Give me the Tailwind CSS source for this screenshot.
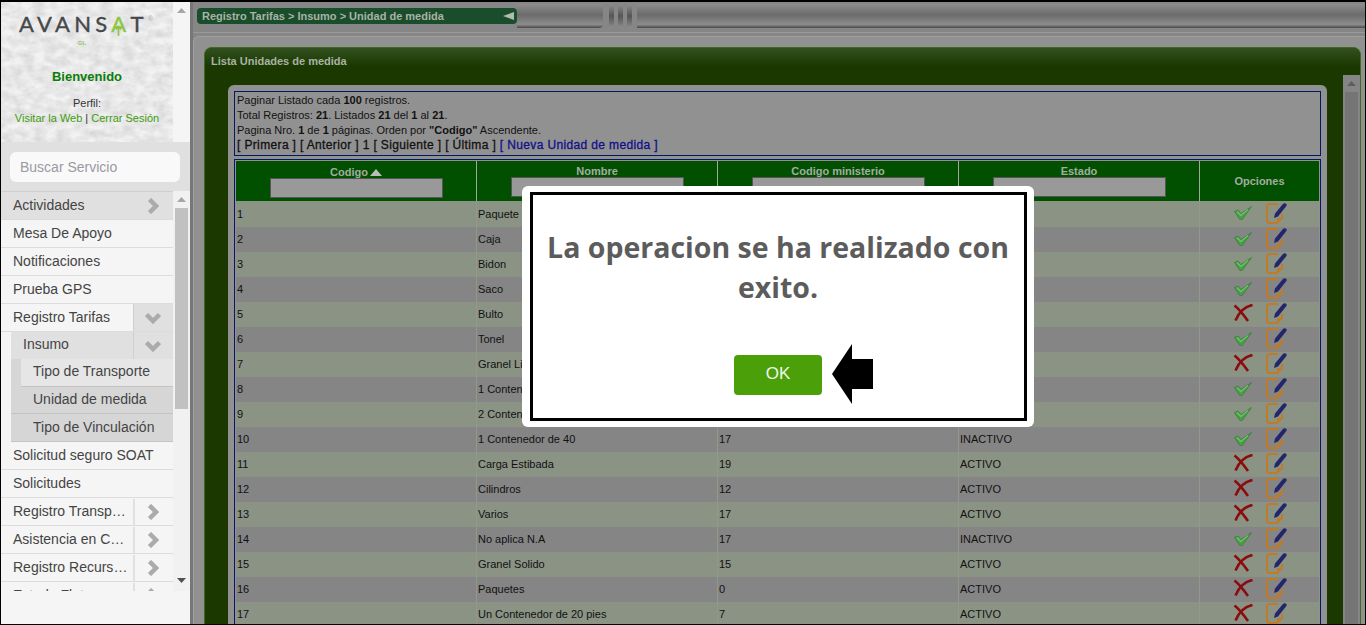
<!DOCTYPE html>
<html lang="en">
<head>
    <meta charset="UTF-8">
    <title>Unidad de medida - Avansat</title>
    <script src="https://cdn.jsdelivr.net/npm/@tailwindcss/browser@4"></script>
</head>
<body class="overflow-hidden bg-black">
<svg class="hidden">
    <defs>
        <filter id="paper"><feTurbulence type="fractalNoise" baseFrequency="0.09 0.14" numOctaves="3" seed="4"/><feColorMatrix values="0 0 0 0 0.6  0 0 0 0 0.6  0 0 0 0 0.6  0.5 0 0 0 -0.13"/></filter>
        <symbol id="check" viewBox="0 0 18 14"><path d="M0.500 5.500 L4 4 L7 7.500 L17.500 0.500 L8 13.700 L6 13.700 Z" fill="#4a9f48" stroke="#35803a" stroke-width="0.800"/><path d="M3 5.500 L6.800 9.500 L14 3.500" fill="none" stroke="#72c26b" stroke-width="1.200"/></symbol>
        <symbol id="cross" viewBox="0 0 20 18"><path d="M1.500 1.500 C6 5 10 10 15 17" fill="none" stroke="#8a0c0c" stroke-width="2.600"/><path d="M19.500 1 C12 2.500 6 8 2.500 16.500" fill="none" stroke="#8a0c0c" stroke-width="2.600"/></symbol>
        <symbol id="edit" viewBox="0 0 21 21"><path d="M12 1 H4 Q1 1 1 4 V17 Q1 20 4 20 H11 L16 15 V11" fill="none" stroke="#c17b26" stroke-width="2"/><path d="M11 20 V15 H16 Z" fill="#c17b26"/><path d="M9 10.500 L16.500 1.500 Q18.500 -0.500 20.500 1 Q21 2.500 20 3.500 L12 13.500 L8 15 Z" fill="#23266b"/></symbol>
        <symbol id="chev-right" viewBox="0 0 12 16"><path d="M2.500 1.500 L9 8 L2.500 14.500" fill="none" stroke="#ababab" stroke-width="4.500"/></symbol>
        <symbol id="chev-down" viewBox="0 0 16 12"><path d="M1.500 2.500 L8 9 L14.500 2.500" fill="none" stroke="#ababab" stroke-width="4.500"/></symbol>
    </defs>
</svg>

<div class="relative flex w-[1366px] h-[625px] box-border border-t-2 border-x border-b border-black overflow-hidden font-['Liberation_Sans',Arial,sans-serif]">

    <!-- menu lateral -->
    <aside class="flex flex-col w-[189px] shrink-0 bg-[#f5f5f5]">
        <div class="flex h-[140px] shrink-0">
            <div class="relative w-[172px] bg-[#f2f2f2] overflow-hidden flex flex-col items-center">
                <svg class="absolute inset-0 w-full h-full"><rect width="100%" height="100%" filter="url(#paper)"/></svg>
                <div class="relative mt-[9px] h-[30px] flex items-start -ml-[2px]">
                    <span class="font-['Lato',sans-serif] text-[22px] leading-[26px] tracking-[4.300px] text-[#45484b] [-webkit-text-stroke:0.4px_#45484b]">AVANS<span class="relative text-[#8cc63f] [-webkit-text-stroke:0.4px_#8cc63f]">A<svg class="absolute left-[4px] top-[15px] w-[7px] h-[11px]" viewBox="0 0 7 11"><path d="M3.500 11 V2 M1 4.500 L3.500 1.500 L6 4.500" fill="none" stroke="#8cc63f" stroke-width="1.600"/></svg></span>T</span>
                    <span class="text-[7px] leading-[8px] mt-[4px] text-[#aaa]">®</span>
                </div>
                <span class="relative -ml-[10px] -mt-[1px] text-[6px] font-bold leading-[6px] text-[#9cc45c]">GL</span>
                <p class="relative mt-[23px] text-[13px] leading-[15px] text-[#0a7d0a] font-bold">Bienvenido</p>
                <p class="relative mt-[13px] text-[11px] leading-[13px] text-[#333]">Perfil:</p>
                <p class="relative mt-[0px] text-[11px] leading-[16px] text-[#3f9a0f]">Visitar la Web <span class="text-[#333]">|</span> Cerrar Sesión</p>
            </div>
            <div class="flex-1 flex justify-center pt-[6px]">
                <svg class="w-[9px] h-[5px]" viewBox="0 0 9 5"><path d="M4.500 0 L9 5 H0 Z" fill="#a6a6a6"/></svg>
            </div>
        </div>
        <div class="h-[49px] shrink-0 bg-[#e0e0e0] pt-[10px] pl-[9px]">
            <div class="w-[170px] h-[30px] rounded-md bg-[#f9f9f9] pl-[10px] text-[14px] leading-[30px] text-[#9a9aa2]">Buscar Servicio</div>
        </div>
        <div class="flex h-[400px] shrink-0 overflow-hidden">
            <ul id="menu" class="w-[172px] text-[14px] text-[#444] border-t border-[#cfcfcf]"></ul>
            <div class="flex-1 flex flex-col items-center bg-[#f1f1f1]">
                <svg class="w-[9px] h-[5px] mt-[6px]" viewBox="0 0 9 5"><path d="M4.500 0 L9 5 H0 Z" fill="#a6a6a6"/></svg>
                <div class="w-[13px] h-[201px] mt-[6px] bg-[#c1c1c1]"></div>
                <svg class="w-[9px] h-[5px] mt-auto mb-[8px]" viewBox="0 0 9 5"><path d="M4.500 5 L9 0 H0 Z" fill="#505050"/></svg>
            </div>
        </div>
    </aside>

    <!-- contenido -->
    <main class="flex-1 flex flex-col bg-[#868686] border-l-[3px] border-[#777] min-w-0">
        <div class="relative flex h-[26px] shrink-0 items-start pt-[6px] pl-[4px]">
            <div class="flex items-center justify-between w-[320px] h-[16px] pl-[5px] pr-[3px] bg-[#1a4d2b] rounded-sm text-[11px] leading-[18px] font-bold text-[#a9b3a5]">
                <span>Registro Tarifas &gt; Insumo &gt; Unidad de medida</span>
                <svg class="w-[11px] h-[8px]" viewBox="0 0 11 8"><path d="M0 4 L11 0 V8 Z" fill="#b4bab2"/></svg>
            </div>
            <div class="flex-1 h-[24px] -mt-[4px] flex">
                <div class="w-[86px] bg-[linear-gradient(#8d8d8d,#6b6b6b_45%,#8c8c8c_85%,#4a4a4a)] rounded-r-sm"></div>
                <div class="w-[6px]"></div>
                <div class="w-[5px] bg-[linear-gradient(#8d8d8d,#555_50%,#8c8c8c)] mr-[4px]"></div>
                <div class="w-[5px] bg-[linear-gradient(#8d8d8d,#555_50%,#8c8c8c)] mr-[4px]"></div>
                <div class="w-[5px] bg-[linear-gradient(#8d8d8d,#555_50%,#8c8c8c)] mr-[5px]"></div>
                <div class="flex-1 bg-[linear-gradient(#8d8d8d,#6b6b6b_45%,#8c8c8c_85%,#4a4a4a)]"></div>
            </div>
        </div>
        <div class="h-[5px] shrink-0 border-b border-[#9a9a9a]"></div>
        <div class="h-[3px] shrink-0"></div>
        <div class="flex-1 min-h-0 bg-[#919191] border-l border-t border-[#a0a0a0] rounded-tl-md pt-[10px] pl-[10px] pr-[4px]">
            <section class="h-full flex flex-col rounded-t-lg border border-[#3f6b20] border-b-0 bg-[#1a3800] overflow-hidden">
                <div class="h-[18px] shrink-0 bg-[linear-gradient(#33511f,#1a3800)]"></div>
                <div class="flex-1 min-h-0 flex">
                    <div class="flex-1 min-w-0 flex flex-col">
                        <h1 class="h-[20px] -mt-[15px] pl-[6px] text-[11px] leading-[20px] font-bold text-[#aab2a4]">Lista Unidades de medida</h1>
                        <div class="flex-1 min-h-0 ml-[23px] mr-[16px] mt-[14px] p-[6px] pb-0 bg-[#919191] rounded-t-md overflow-hidden">
                            <div class="h-[65px] border border-[#001a66] pl-[2px] pt-[1px] text-[11px] leading-[15px] text-[#111]">
                                <p>Paginar Listado cada <b>100</b> registros.</p>
                                <p>Total Registros: <b>21</b>. Listados <b>21</b> del <b>1</b> al <b>21</b>.</p>
                                <p>Pagina Nro. <b>1</b> de <b>1</b> páginas. Orden por <b>"Codigo"</b> Ascendente.</p>
                                <p class="text-[12px] leading-[15px] tracking-[0.360px] [-webkit-text-stroke:0.3px]">[ Primera ] [ Anterior ] 1 [ Siguiente ] [ Última ] <span class="text-[#10108c]">[ Nueva Unidad de medida ]</span></p>
                            </div>
                            <div class="mt-[3px] border border-[#001a66] border-b-0 p-[1px] pb-0">
                                <div class="grid grid-cols-[241px_241px_241px_241px_1fr] h-[40px] bg-[#005000] text-[11px] font-bold text-[#a3aca0]">
                                    <div class="flex flex-col items-center border-r border-[#9fa89c] pt-[5px]">
                                        <span class="h-[12px] leading-[13px] flex items-center gap-[2px]">Codigo <svg class="w-[12px] h-[7px]" viewBox="0 0 12 7"><path d="M6 0 L12 7 H0 Z" fill="#b8bdb6"/></svg></span>
                                        <div class="w-[173px] h-[20px] bg-[#999] border border-[#555]"></div>
                                    </div>
                                    <div class="flex flex-col items-center border-r border-[#9fa89c] pt-[4px]">
                                        <span class="h-[12px] leading-[13px]">Nombre</span>
                                        <div class="w-[173px] h-[20px] bg-[#999] border border-[#555]"></div>
                                    </div>
                                    <div class="flex flex-col items-center border-r border-[#9fa89c] pt-[4px]">
                                        <span class="h-[12px] leading-[13px]">Codigo ministerio</span>
                                        <div class="w-[173px] h-[20px] bg-[#999] border border-[#555]"></div>
                                    </div>
                                    <div class="flex flex-col items-center border-r border-[#9fa89c] pt-[4px]">
                                        <span class="h-[12px] leading-[13px]">Estado</span>
                                        <div class="w-[173px] h-[20px] bg-[#999] border border-[#555]"></div>
                                    </div>
                                    <div class="flex items-center justify-center">Opciones</div>
                                </div>
                                <div id="rows" class="text-[11px] text-[#111]"></div>
                            </div>
                        </div>
                    </div>
                    <div class="w-[17px] shrink-0 mt-[9px] flex flex-col items-center bg-[#858585]">
                        <svg class="w-[9px] h-[5px] mt-[6px]" viewBox="0 0 9 5"><path d="M4.500 0 L9 5 H0 Z" fill="#5e5e5e"/></svg>
                        <div class="w-[13px] flex-1 mt-[6px] bg-[#757575]"></div>
                    </div>
                </div>
            </section>
        </div>
    </main>

    <!-- mensaje -->
    <div class="absolute left-[521px] top-[184px] w-[512px] h-[241px] rounded-md bg-white pt-[6px] pl-[8px] pr-[7px] pb-[6px]">
        <div class="h-full border-[3px] border-black flex flex-col items-center pt-[32px]">
            <p class="w-[480px] -ml-[1px] text-center font-['Open_Sans',sans-serif] text-[28.5px] leading-[40px] font-bold text-[#5c5c5c]">La operacion se ha realizado con exito.</p>
            <div class="relative -ml-[1px] mt-[48px]">
                <div class="w-[88px] h-[40px] rounded bg-[#4ba00a] text-center text-[17px] leading-[38px] text-[#f2f7ec]">OK</div>
                <svg class="absolute left-[98px] -top-[11px] w-[41px] h-[60px]" viewBox="0 0 41 60"><path d="M0 30 L20 0 V15 H41 V45 H20 V60 Z" fill="#000"/></svg>
            </div>
        </div>
    </div>
</div>

<script>
    var menu = [
        ["Actividades", "right", "bg-[#e0e0e0]"],
        ["Mesa De Apoyo"],
        ["Notificaciones"],
        ["Prueba GPS"],
        ["Registro Tarifas", "down"],
        ["Insumo", "down", "sub"],
        ["Tipo de Transporte", "", "leaf1"],
        ["Unidad de medida", "", "leaf2"],
        ["Tipo de Vinculación", "", "leaf3"],
        ["Solicitud seguro SOAT"],
        ["Solicitudes"],
        ["Registro Transportadores", "right"],
        ["Asistencia en Carretera", "right"],
        ["Registro Recursos", "right"],
        ["Estado Fletes", "right"]
    ];
    document.getElementById("menu").innerHTML = menu.map(function (m) {
        var icon = "";
        if (m[1] == "right") icon = '<span class="w-[40px] h-[26px] flex items-center justify-center pr-[2px] border-l-2 border-[#e0e0e0]"><svg class="w-[12px] h-[16px]"><use href="#chev-right"/></svg></span>';
        if (m[1] == "down") icon = '<span class="w-[40px] h-[27px] flex items-center justify-center pr-[2px] border-l border-[#cfcfcf] bg-[#e0e0e0]"><svg class="w-[16px] h-[12px]"><use href="#chev-down"/></svg></span>';
        if (m[2] == "sub") return '<li class="flex items-center h-[27px] ml-[10px] bg-[#e0e0e0]"><span class="flex-1 pl-[12px] pb-[2px]">' + m[0] + '</span>' + icon + '</li>';
        if (m[2] == "leaf1") return '<li class="h-[28px] pl-[10px] bg-[#f5f5f5]"><div class="h-full pl-[10px] bg-[#d6d6d6]"><div class="h-full pl-[12px] leading-[25px] bg-[#e6e6e6] border-b border-[#c4c4c4]">' + m[0] + '</div></div></li>';
        if (m[2] == "leaf2") return '<li class="h-[27px] pl-[10px] bg-[#f5f5f5]"><div class="h-full pl-[22px] leading-[25px] bg-[#d6d6d6] border-b border-[#c4c4c4]">' + m[0] + '</div></li>';
        if (m[2] == "leaf3") return '<li class="h-[28px] pl-[10px] bg-[#f5f5f5]"><div class="h-full pl-[22px] leading-[27px] bg-[#d6d6d6] border-b border-[#c4c4c4]">' + m[0] + '</div></li>';
        return '<li class="flex items-center h-[28px] border-b border-[#dcdcdc] ' + (m[2] || "") + '"><span class="flex-1 min-w-0 pl-[12px] pr-[5px] truncate">' + m[0] + '</span>' + icon + '</li>';
    }).join("");

    var rows = [
        ["Paquete", "14", "ACTIVO", 1], ["Caja", "2", "ACTIVO", 1], ["Bidon", "3", "ACTIVO", 1], ["Saco", "4", "ACTIVO", 1],
        ["Bulto", "5", "ACTIVO", 0], ["Tonel", "6", "ACTIVO", 1], ["Granel Liquido", "8", "ACTIVO", 0],
        ["1 Contenedor de 20", "17", "INACTIVO", 1], ["2 Contenedor de 20", "17", "INACTIVO", 1],
        ["1 Contenedor de 40", "17", "INACTIVO", 1], ["Carga Estibada", "19", "ACTIVO", 0], ["Cilindros", "12", "ACTIVO", 0],
        ["Varios", "17", "ACTIVO", 0], ["No aplica N.A", "17", "INACTIVO", 1], ["Granel Solido", "15", "ACTIVO", 0],
        ["Paquetes", "0", "ACTIVO", 0], ["Un Contenedor de 20 pies", "7", "ACTIVO", 0]
    ];
    document.getElementById("rows").innerHTML = rows.map(function (r, i) {
        var bg = i % 2 == 0 ? "bg-[#8b9385]" : "bg-[#858585]";
        var size = i == 0 ? "h-[26px] leading-[26px]" : "h-[25px] leading-[25px]";
        var mark = r[3] ? '<svg class="w-[18px] h-[14px] -mt-[2px]"><use href="#check"/></svg>' : '<svg class="w-[20px] h-[18px] -mt-[3px] -mx-[1px]"><use href="#cross"/></svg>';
        return '<div class="grid grid-cols-[241px_241px_241px_241px_1fr] ' + size + ' ' + bg + '">' +
            '<div class="pl-[1px] border-r border-[#8f9a8b]">' + (i + 1) + '</div>' +
            '<div class="pl-[1px] border-r border-[#8f9a8b]">' + r[0] + '</div>' +
            '<div class="pl-[1px] border-r border-[#8f9a8b]">' + r[1] + '</div>' +
            '<div class="pl-[1px] border-r border-[#8f9a8b]">' + r[2] + '</div>' +
            '<div class="flex items-center justify-center gap-[14px] pl-[2px]">' + mark + '<svg class="w-[21px] h-[21px] -mt-[2px]"><use href="#edit"/></svg></div>' +
            '</div>';
    }).join("");
</script>
</body>
</html>
